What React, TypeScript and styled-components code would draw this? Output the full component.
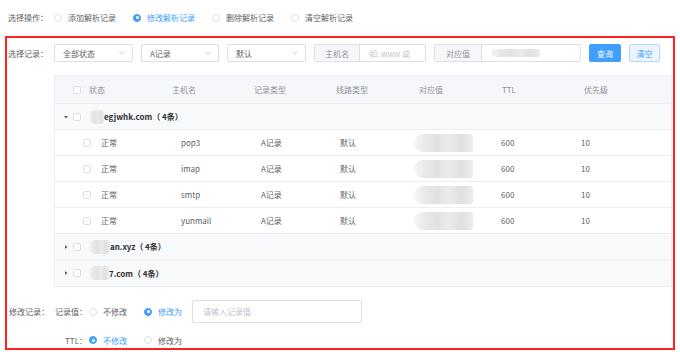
import React from 'react';
import styled, { createGlobalStyle } from 'styled-components';

const GlobalStyle = createGlobalStyle`
  html, body {
    margin: 0;
    padding: 0;
    background: #fff;
  }
  body {
    font-family: "Noto Sans CJK SC", "Noto Sans", sans-serif;
    font-size: 8px;
    color: #606266;
  }
`;

const Page = styled.div`
  width: 680px;
  height: 352px;
  overflow: hidden;
`;

const TopBar = styled.div`
  height: 35px;
  display: flex;
  align-items: center;
  padding-left: 8px;
`;

const FieldLabel = styled.div`
  width: 46px;
  flex-shrink: 0;
  white-space: nowrap;
  color: #606266;
`;

const RadioItem = styled.label<{ $checked?: boolean }>`
  display: flex;
  align-items: center;
  gap: 6px;
  margin-right: 17px;
  white-space: nowrap;
  color: ${(p) => (p.$checked ? '#409eff' : '#606266')};
`;

const RadioDot = styled.span<{ $checked?: boolean }>`
  width: 8px;
  height: 8px;
  box-sizing: border-box;
  border-radius: 50%;
  border: 1px solid ${(p) => (p.$checked ? '#409eff' : '#dcdfe6')};
  background: ${(p) => (p.$checked ? '#409eff' : '#fff')};
  display: flex;
  align-items: center;
  justify-content: center;
  &::after {
    content: '';
    width: 3px;
    height: 3px;
    border-radius: 50%;
    background: #fff;
    display: ${(p) => (p.$checked ? 'block' : 'none')};
  }
`;

const Radio = ({ label, checked }: { label: string; checked?: boolean }) => (
  <RadioItem $checked={checked}>
    <RadioDot $checked={checked} />
    {label}
  </RadioItem>
);

const Box = styled.div`
  margin: 1px 5px 0 5px;
  border: 2px solid #ff2020;
  padding: 6px 0 0 1px;
`;

const FilterRow = styled.div`
  height: 18px;
  display: flex;
  align-items: center;
  gap: 8px;
  & > ${FieldLabel} {
    margin-right: -8px;
  }
`;

const Select = styled.div<{ $w: number }>`
  width: ${(p) => p.$w}px;
  height: 18px;
  box-sizing: border-box;
  border: 1px solid #dcdfe6;
  border-radius: 2px;
  display: flex;
  align-items: center;
  justify-content: space-between;
  padding: 0 7px 0 8px;
  color: #606266;
`;

const Chevron = () => (
  <svg width="6" height="4" viewBox="0 0 6 4">
    <polyline points="0.5,0.5 3,3.2 5.5,0.5" fill="none" stroke="#c0c4cc" strokeWidth="0.8" />
  </svg>
);

const InputGroup = styled.div<{ $w: number }>`
  width: ${(p) => p.$w}px;
  height: 18px;
  box-sizing: border-box;
  border: 1px solid #dcdfe6;
  border-radius: 2px;
  display: flex;
  overflow: hidden;
`;

const Addon = styled.div<{ $w: number }>`
  width: ${(p) => p.$w}px;
  flex-shrink: 0;
  background: #f5f7fa;
  border-right: 1px solid #dcdfe6;
  display: flex;
  align-items: center;
  justify-content: center;
  color: #909399;
`;

const InputBody = styled.div`
  flex: 1;
  display: flex;
  align-items: center;
  padding-left: 9px;
  color: #c0c4cc;
  white-space: nowrap;
`;

const Button = styled.div<{ $primary?: boolean; $w: number }>`
  width: ${(p) => p.$w}px;
  height: 18px;
  box-sizing: border-box;
  border-radius: 2px;
  display: flex;
  align-items: center;
  justify-content: center;
  background: ${(p) => (p.$primary ? '#409eff' : '#ecf5ff')};
  border: 1px solid ${(p) => (p.$primary ? '#409eff' : '#b3d8ff')};
  color: ${(p) => (p.$primary ? '#fff' : '#409eff')};
`;

// stands in for the pixelated / blurred-out values in the screenshot
const Blur = styled.div<{ $w: number; $h: number }>`
  width: ${(p) => p.$w}px;
  height: ${(p) => p.$h}px;
  flex-shrink: 0;
  border-radius: ${(p) => p.$h / 2}px 3px 3px ${(p) => p.$h / 2}px;
  background: linear-gradient(90deg, #f6f6f6 0%, #e9e9e9 18%, #e2e2e2 40%, #ebebeb 60%, #e0e0e0 80%, #ececec 100%);
  filter: blur(0.7px);
`;

const Table = styled.div`
  margin: 13px 0 0 46px;
  width: 618px;
  box-sizing: border-box;
  border: 1px solid #ebeef5;
`;

const HeaderRow = styled.div`
  height: 28px;
  box-sizing: border-box;
  background: #f5f7fa;
  border-bottom: 1px solid #ebeef5;
  display: grid;
  grid-template-columns: 16px 83px 82px 82px 83px 83px 82px 1fr;
  align-items: center;
  padding-left: 18px;
  color: #909399;
`;

const GroupRow = styled.div`
  height: 26px;
  box-sizing: border-box;
  background: #f8f9fb;
  border-bottom: 1px solid #ebeef5;
  display: flex;
  align-items: center;
  padding-left: 9px;
  &:last-child {
    border-bottom: none;
  }
`;

const DataRow = styled.div`
  height: 26px;
  box-sizing: border-box;
  border-bottom: 1px solid #ebeef5;
  display: grid;
  grid-template-columns: 18px 80px 80px 79px 74px 87px 80px 1fr;
  align-items: center;
  padding-left: 28px;
  color: #606266;
`;

const Checkbox = styled.span`
  width: 8px;
  height: 8px;
  box-sizing: border-box;
  border: 1px solid #dcdfe6;
  border-radius: 2px;
  background: #fff;
  display: block;
`;

const Caret = styled.span`
  width: 9px;
  display: flex;
  align-items: center;
`;

const Spacer = styled.span`
  width: 8px;
  flex-shrink: 0;
`;

const GroupName = styled.span`
  font-weight: 600;
  color: #303133;
  white-space: nowrap;
`;

const Arrow = ({ open }: { open?: boolean }) => (
  <Caret>
    <svg width="4" height="4" viewBox="0 0 4 4">
      {open ? (
        <polygon points="0,1 4,1 2,3.5" fill="#606266" />
      ) : (
        <polygon points="1,0 3.5,2 1,4" fill="#606266" />
      )}
    </svg>
  </Caret>
);

const Bottom = styled.div`
  margin-top: 13px;
`;

const EditRow = styled.div<{ $h: number; $mt?: number }>`
  height: ${(p) => p.$h}px;
  margin-top: ${(p) => p.$mt || 0}px;
  display: flex;
  align-items: center;
  padding-left: 1px;
`;

const SubLabel = styled.div`
  width: 32px;
  margin-right: 2px;
  text-align: right;
  white-space: nowrap;
`;

const TextInput = styled.div`
  width: 170px;
  height: 23px;
  box-sizing: border-box;
  border: 1px solid #dcdfe6;
  border-radius: 2px;
  display: flex;
  align-items: center;
  padding-left: 10px;
  margin-left: -7px;
  color: #c0c4cc;
`;

const groups = [
  { name: 'egjwhk.com（ 4条）', blur: 15, open: true },
  { name: 'an.xyz（ 4条）', blur: 21 },
  { name: '7.com（ 4条）', blur: 20 },
];

const records = ['pop3', 'imap', 'smtp', 'yunmail'];

export default function App() {
  return (
    <Page>
      <GlobalStyle />
      <TopBar>
        <FieldLabel>选择操作：</FieldLabel>
        <Radio label="添加解析记录" />
        <Radio label="修改解析记录" checked />
        <Radio label="删除解析记录" />
        <Radio label="清空解析记录" />
      </TopBar>
      <Box>
        <FilterRow>
          <FieldLabel>选择记录：</FieldLabel>
          <Select $w={79}>
            全部状态
            <Chevron />
          </Select>
          <Select $w={78}>
            A记录
            <Chevron />
          </Select>
          <Select $w={79}>
            默认
            <Chevron />
          </Select>
          <InputGroup $w={112}>
            <Addon $w={44}>主机名</Addon>
            <InputBody>如: www 或</InputBody>
          </InputGroup>
          <InputGroup $w={147}>
            <Addon $w={46}>对应值</Addon>
            <InputBody>
              <Blur $w={49} $h={8} />
            </InputBody>
          </InputGroup>
          <Button $primary $w={32}>查询</Button>
          <Button $w={31}>清空</Button>
        </FilterRow>

        <Table>
          <HeaderRow>
            <Checkbox />
            <span>状态</span>
            <span>主机名</span>
            <span>记录类型</span>
            <span>线路类型</span>
            <span>对应值</span>
            <span>TTL</span>
            <span>优先级</span>
          </HeaderRow>
          {groups.map((g) => (
            <React.Fragment key={g.name}>
              <GroupRow>
                <Arrow open={g.open} />
                <Checkbox />
                <Spacer />
                <Blur $w={g.blur} $h={14} />
                <GroupName>{g.name}</GroupName>
              </GroupRow>
              {g.open &&
                records.map((r) => (
                  <DataRow key={r}>
                    <Checkbox />
                    <span>正常</span>
                    <span>{r}</span>
                    <span>A记录</span>
                    <span>默认</span>
                    <Blur $w={59} $h={18} />
                    <span>600</span>
                    <span>10</span>
                  </DataRow>
                ))}
            </React.Fragment>
          ))}
        </Table>

        <Bottom>
          <EditRow $h={23}>
            <FieldLabel>修改记录：</FieldLabel>
            <SubLabel>记录值：</SubLabel>
            <Radio label="不修改" />
            <Radio label="修改为" checked />
            <TextInput>请输入记录值</TextInput>
          </EditRow>
          <EditRow $h={16} $mt={9}>
            <FieldLabel />
            <SubLabel>TTL：</SubLabel>
            <Radio label="不修改" checked />
            <Radio label="修改为" />
          </EditRow>
        </Bottom>
      </Box>
    </Page>
  );
}
